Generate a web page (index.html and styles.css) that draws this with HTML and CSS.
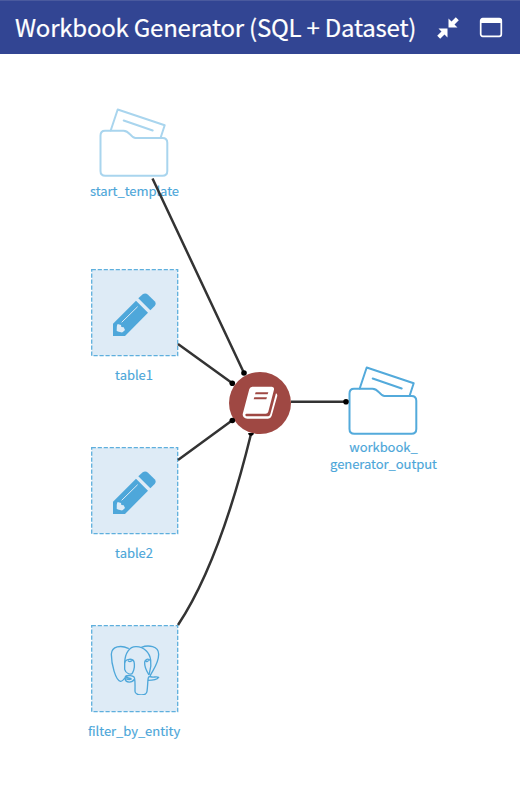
FILE: index.html
```html
<!DOCTYPE html>
<html lang="en">
<head>
<meta charset="utf-8">
<title>Workbook Generator</title>
<link rel="stylesheet" href="styles.css">
</head>
<body>
<svg class="symbols" aria-hidden="true">
  <symbol id="folder" viewBox="0 0 76 76">
    <path d="M14.7 26.5 21.7 5.5 68.7 21.3 64.7 33.5M27.7 16.5 56.7 26.5"/>
    <path d="M9 26.7H27.500C34 26.700 34.500 34 39.500 34H66.5Q71.3 34 71.3 38.8V67Q71.3 71.8 66.5 71.8H9.300Q4.500 71.800 4.500 67V31.500Q4.500 26.700 9 26.700Z"/>
  </symbol>
  <symbol id="pencil" viewBox="71 74 156 156">
    <path fill-rule="evenodd" d="M152 115 188 151 119 221H83V184ZM97 185C93 190 95 198 94 205C99 209 103 207 107 210C112 211 116 206 119 203L115 195 108 194 107 188Z"/>
    <path d="M159 108 172 96Q180 90 188 97L208 117Q214 124 208 131L195 144Z"/>
    <path class="shine" d="M109 180 157 133"/>
  </symbol>
  <symbol id="frame" viewBox="0 0 88 88"><rect x="0.700" y="0.700" width="86" height="86"/></symbol>
</svg>
<header class="header">
  <h1 class="title">Workbook Generator (SQL + Dataset)</h1>
  <svg class="compress" viewBox="0 0 24 24"><path d="M12.500 2.500V11.500H21.500L18.500 8.500 22.800 4.200 19.800 1.200 15.500 5.500ZM2.500 12.500H11.500V21.500L8.500 18.500 4.200 22.800 1.200 19.800 5.500 15.500Z"/></svg>
  <svg class="window" viewBox="0 0 24 22"><rect x="1.700" y="1.700" width="20.600" height="17.600" rx="2"/><path d="M2 4H22"/></svg>
</header>
<main class="canvas">
  <div class="node folder-node start">
    <svg class="folder"><use href="#folder"/></svg>
    <span class="label">start_template</span>
  </div>
  <div class="node table1">
    <div class="box"><svg class="frame"><use href="#frame"/></svg><svg class="icon"><use href="#pencil"/></svg></div>
    <span class="label">table1</span>
  </div>
  <div class="node table2">
    <div class="box"><svg class="frame"><use href="#frame"/></svg><svg class="icon"><use href="#pencil"/></svg></div>
    <span class="label">table2</span>
  </div>
  <div class="node filter">
    <div class="box">
      <svg class="frame"><use href="#frame"/></svg>
      <svg class="icon elephant" viewBox="71 74 156 156">
        <path d="M129 90C107 80 79 83 78 108C78 137 91 188 106 189C112 190 117 179 124 173"/>
        <path d="M118 133C119 103 133 84 153 85C177 86 193 103 196 125C199 145 194 156 191 169"/>
        <path d="M168 87C189 79 220 83 220 108C220 135 204 153 195 171"/>
        <path d="M118 133C120 121 142 119 146 130C149 142 148 151 142 163C138 172 121 166 118 153V133M129 128Q134 132 139 127"/>
        <path d="M195 127C189 119 179 123 178 131C177 146 183 157 190 168M182 128Q185 132 189 127"/>
        <path d="M146 176C142 171 129 170 120 174C122 180 135 177 138 182C130 186 122 181 119 181C121 195 141 193 146 184M147 177C150 187 149 203 149 219C149 232 184 235 185 219C187 205 187 194 188 184C190 173 188 176 196 175C204 179 212 173 220 177C213 186 201 186 188 186"/>
      </svg>
    </div>
    <span class="label">filter_by_entity</span>
  </div>
  <div class="recipe">
    <svg class="book" viewBox="58 60 112 106">
      <path fill-rule="evenodd" d="M92 65H151Q159 66 157 74L140 140Q138 146 132 146H74Q69 148 72 152Q73 154 78 154H140Q144 154 146 148L163 85Q169 88 166 96L150 153Q147 161 139 161H77Q63 160 63 148L83 72Q85 66 92 65ZM102 82 100 88H138L140 82ZM98 97 96 103H134L136 97Z"/>
    </svg>
  </div>
  <div class="node folder-node output">
    <svg class="folder"><use href="#folder"/></svg>
    <span class="label">workbook_<br>generator_output</span>
  </div>
  <svg class="edges" viewBox="0 54 520 736">
    <path d="M152.500 178.500 244 373M178 344 232 383M178 460 232 420.500M178 625Q219.500 562.500 251 434M291 401.800H346"/>
    <circle cx="244" cy="373" r="2.800"/><circle cx="232.300" cy="383.300" r="2.800"/><circle cx="232.300" cy="420.500" r="2.800"/><path class="cap" d="M248.200 433A2.800 2.800 0 1 0 253.800 433Z"/><circle cx="346" cy="401.800" r="2.800"/>
  </svg>
</main>
</body>
</html>
```
FILE: styles.css
```css
* { box-sizing: border-box; }
body { margin: 0; background: #fff; font-family: "Noto Sans CJK SC", sans-serif; }
.symbols { position: absolute; width: 0; height: 0; }
.header { height: 54px; display: flex; align-items: center; padding: 0 17px 0 15px; background: #324593; border-top: 1px solid #4a5a9e; color: #fff; }
.title { margin: 0; padding-bottom: 2px; font-size: 24px; font-weight: 400; line-height: 50px; letter-spacing: -0.220px; word-spacing: 0; white-space: nowrap; width: 421px; flex: none; -webkit-text-stroke: 0.200px #fff; }
.compress { width: 24px; height: 24px; fill: #fff; flex: none; }
.window { width: 24px; height: 22px; margin-left: auto; fill: none; stroke: #fff; stroke-width: 1.700; flex: none; }
.window path { stroke-width: 4; }
.canvas { position: relative; height: 736px; overflow: hidden; }
.node { position: absolute; width: 130px; display: flex; flex-direction: column; align-items: center; color: #4ca6d9; }
.start { left: 69.500px; top: 50px; }
.start .folder { stroke: #a9d5ee; }
.output { left: 318.500px; top: 308px; }
.table1 { left: 69px; top: 215px; }
.table2 { left: 69px; top: 393px; }
.filter { left: 69px; top: 571px; }
.folder { width: 76px; height: 76px; margin-left: -1px; fill: none; stroke: #53aadb; stroke-width: 2; stroke-linejoin: round; stroke-linecap: round; }
.box { width: 88px; height: 88px; display: grid; place-items: center; margin-left: 1px; }
.box > svg { grid-area: 1 / 1; }
.frame { width: 88px; height: 88px; fill: #deebf6; stroke: #5eafdd; stroke-width: 1.300; stroke-dasharray: 4.200 1.800; }
.icon { width: 52px; height: 52px; fill: #4ea7da; }
.shine { stroke: #deebf6; stroke-width: 3; }
.elephant { fill: none; stroke: #4ea7da; stroke-width: 4; stroke-linejoin: round; stroke-linecap: round; }
.label { margin-top: 9px; font-size: 13px; line-height: 17px; letter-spacing: -0.050px; text-align: center; white-space: nowrap; -webkit-text-stroke: 0.150px #4ca6d9; }
.folder-node .label { margin-top: 2px; }
.output .label { margin-top: 0; }
.recipe { position: absolute; left: 229px; top: 318px; width: 62px; height: 62px; border-radius: 50%; background: #9f4843; display: flex; align-items: center; justify-content: center; }
.book { width: 37.300px; height: 35.300px; fill: #fff; }
.edges { position: absolute; left: 0; top: 0; width: 520px; height: 736px; fill: none; stroke: #333; stroke-width: 2.500; }
.edges circle, .edges .cap { fill: #000; stroke: none; }
```
